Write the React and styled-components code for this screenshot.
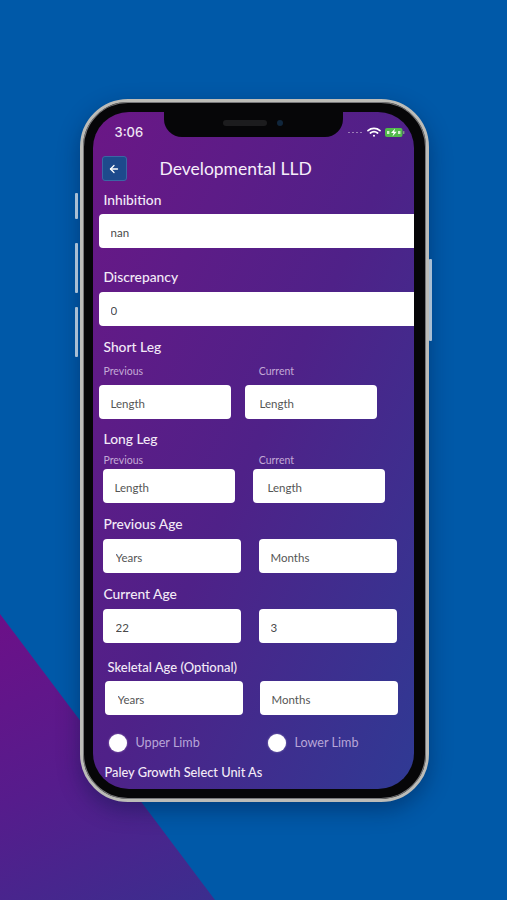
import React from "react";
import styled, { createGlobalStyle } from "styled-components";
import { ArrowLeft } from "lucide-react";

const GlobalStyle = createGlobalStyle`
  html, body {
    margin: 0;
    padding: 0;
    background: #0059a8;
    font-family: "Lato", "Liberation Sans", sans-serif;
  }
`;

const Page = styled.div`
  position: relative;
  width: 507px;
  height: 900px;
  overflow: hidden;
  background: #0059a8;
  display: flex;
  justify-content: center;
  align-items: flex-start;
  padding-top: 99px;
  box-sizing: border-box;
`;

const Corner = styled.div`
  position: absolute;
  left: 0;
  top: 614px;
  width: 215px;
  height: 286px;
  clip-path: polygon(0 0, 100% 100%, 0 100%);
  background: linear-gradient(155deg, #6c1088 0%, #561c8c 50%, #3b2e8e 100%);
`;

const Phone = styled.div`
  position: relative;
  width: 349px;
  height: 703px;
  box-sizing: border-box;
  margin-left: 1px;
  padding: 10px 11.5px 10px 10px;
  border: 3px solid #bcbcb8;
  border-radius: 48px;
  background: #060608;
  box-shadow: inset 0 0 0 1px #77777a, 0 8px 22px rgba(0, 20, 60, 0.4);
`;

const SideButton = styled.div`
  position: absolute;
  top: ${(p) => p.$top}px;
  ${(p) => (p.$right ? "right: -6px;" : "left: -7.5px;")}
  width: 3px;
  height: ${(p) => p.$height}px;
  background: #a9bfd4;
  border-radius: 1px;
`;

const Screen = styled.div`
  position: relative;
  height: 100%;
  overflow: hidden;
  border-radius: 36px;
  background: linear-gradient(to bottom right, #6b1786 0%, #4f2188 50%, #2f3a94 100%);
  color: #fff;
  padding-left: 6px;
`;

const Notch = styled.div`
  position: absolute;
  top: 0;
  left: 71px;
  width: 179px;
  height: 25px;
  background: #060608;
  border-radius: 0 0 18px 18px;
  display: flex;
  align-items: center;
  justify-content: center;
  gap: 10px;
  padding-bottom: 4px;
  box-sizing: border-box;
`;

const Speaker = styled.div`
  width: 44px;
  height: 6px;
  border-radius: 3px;
  background: #1c1c1e;
`;

const Camera = styled.div`
  width: 6px;
  height: 6px;
  border-radius: 50%;
  background: #10263c;
`;

const StatusBar = styled.div`
  height: 44px;
  display: flex;
  align-items: flex-start;
  justify-content: space-between;
  padding: 12px 9px 0 16px;
  box-sizing: border-box;
`;

const Time = styled.span`
  font-family: "Inter", "Liberation Sans", sans-serif;
  font-size: 13px;
  line-height: 16px;
  font-weight: 500;
  color: #efe6f4;
`;

const StatusIcons = styled.div`
  display: flex;
  align-items: center;
  gap: 4px;
  height: 16px;
`;

const Dots = styled.span`
  display: flex;
  gap: 2px;
  margin-right: 1px;

  i {
    width: 2px;
    height: 1px;
    background: #9a7db5;
  }
`;

const Header = styled.div`
  height: 25px;
  display: flex;
  align-items: center;
  padding-left: 3px;
`;

const BackButton = styled.div`
  width: 25px;
  height: 25px;
  box-sizing: border-box;
  border: 1px solid #3a66a4;
  border-radius: 3px;
  background: #1d4a8c;
  display: flex;
  align-items: center;
  justify-content: center;
`;

const Title = styled.h1`
  margin: 0 0 0 33px;
  font-size: 17.5px;
  line-height: 24px;
  font-weight: 400;
  color: #f6eefa;
`;

const Label = styled.div`
  margin-top: ${(p) => p.$top}px;
  margin-left: ${(p) => p.$left || 5}px;
  font-size: ${(p) => p.$size || 13.8}px;
  line-height: 16px;
  font-weight: 500;
  color: #f3eaf7;
`;

const SubLabels = styled.div`
  margin-top: ${(p) => p.$top}px;
  display: flex;
  padding-left: 5px;
`;

const SubLabel = styled.span`
  width: 156px;
  font-size: 10.5px;
  line-height: 12px;
  color: #c3a9d6;
`;

const Row = styled.div`
  margin-top: ${(p) => p.$top}px;
  margin-left: ${(p) => p.$left || 0}px;
  display: flex;
  gap: ${(p) => p.$gap || 0}px;
`;

const Field = styled.input`
  width: ${(p) => p.$width}px;
  height: 34px;
  flex: none;
  box-sizing: border-box;
  padding: 3px 0 0 ${(p) => p.$inset || 12}px;
  border: 0;
  border-radius: 4px;
  background: #fff;
  outline: none;
  font-family: "Lato", "Liberation Sans", sans-serif;
  font-size: 11.5px;
  color: #4a4a4a;

  &::placeholder {
    color: #555;
    opacity: 1;
  }
`;

const WideField = styled(Field)`
  width: 330px;
`;

const RadioRow = styled.div`
  margin-top: 19px;
  margin-left: 10px;
  display: flex;
`;

const RadioOption = styled.label`
  flex: none;
  width: 159px;
  display: flex;
  align-items: center;
  gap: 9px;
  font-size: 12.6px;
  line-height: 18px;
  color: #b8a6d8;
`;

const RadioDot = styled.span`
  width: 18px;
  height: 18px;
  border-radius: 50%;
  background: #fff;
  box-shadow: 0 0 2px rgba(255, 255, 255, 0.5);
`;

const Wifi = () => (
  <svg width="14" height="11" viewBox="0 0 14 11" fill="none" stroke="#fff" strokeWidth="1.7" strokeLinecap="round">
    <path d="M1 3.6C4.4 .7 9.6 .7 13 3.6" />
    <path d="M3.4 6C5.5 4.3 8.5 4.3 10.6 6" />
    <circle cx="7" cy="8.8" r="1" fill="#fff" stroke="none" />
  </svg>
);

const Battery = () => (
  <svg width="20" height="9" viewBox="0 0 20 9">
    <rect x="0" y="0" width="17.5" height="9" rx="2" fill="#52b94c" />
    <rect x="18" y="3" width="1.4" height="3" rx=".6" fill="#7d9a80" />
    <path d="M10 .6 6 5h2.6L7.4 8.4 11.8 3.8H9.2z" fill="#fff" />
    <rect x="2" y="3" width="2.4" height="3" fill="#d5efce" />
    <rect x="13" y="3" width="2.4" height="3" fill="#d5efce" />
  </svg>
);

const App = () => {
  return (
    <Page>
      <GlobalStyle />
      <Corner />
      <Phone>
        <SideButton $top={91} $height={26} />
        <SideButton $top={141} $height={50} />
        <SideButton $top={205} $height={50} />
        <SideButton $right $top={157} $height={82} />
        <Screen>
          <Notch>
            <Speaker />
            <Camera />
          </Notch>
          <StatusBar>
            <Time>3:06</Time>
            <StatusIcons>
              <Dots>
                <i />
                <i />
                <i />
                <i />
              </Dots>
              <Wifi />
              <Battery />
            </StatusIcons>
          </StatusBar>
          <Header>
            <BackButton>
              <ArrowLeft size={12} color="#fff" strokeWidth={2.6} />
            </BackButton>
            <Title>Developmental LLD</Title>
          </Header>

          <Label $top={11}>Inhibition</Label>
          <Row $top={6}>
            <WideField readOnly value="nan" />
          </Row>

          <Label $top={21}>Discrepancy</Label>
          <Row $top={7}>
            <WideField readOnly value="0" />
          </Row>

          <Label $top={13}>Short Leg</Label>
          <SubLabels $top={10}>
            <SubLabel>Previous</SubLabel>
            <SubLabel>Current</SubLabel>
          </SubLabels>
          <Row $top={8} $gap={14}>
            <Field $width={132} readOnly placeholder="Length" />
            <Field $width={132} $inset={15} readOnly placeholder="Length" />
          </Row>

          <Label $top={12}>Long Leg</Label>
          <SubLabels $top={7}>
            <SubLabel>Previous</SubLabel>
            <SubLabel>Current</SubLabel>
          </SubLabels>
          <Row $top={3} $left={4} $gap={18}>
            <Field $width={132} readOnly placeholder="Length" />
            <Field $width={132} $inset={15} readOnly placeholder="Length" />
          </Row>

          <Label $top={13}>Previous Age</Label>
          <Row $top={7} $left={4} $gap={18}>
            <Field $width={138} $inset={13} readOnly placeholder="Years" />
            <Field $width={138} readOnly placeholder="Months" />
          </Row>

          <Label $top={13}>Current Age</Label>
          <Row $top={7} $left={4} $gap={18}>
            <Field $width={138} $inset={13} readOnly value="22" />
            <Field $width={138} readOnly value="3" />
          </Row>

          <Label $top={16} $left={9} $size={13}>
            Skeletal Age (Optional)
          </Label>
          <Row $top={6} $left={6} $gap={17}>
            <Field $width={138} $inset={13} readOnly placeholder="Years" />
            <Field $width={138} readOnly placeholder="Months" />
          </Row>

          <RadioRow>
            <RadioOption>
              <RadioDot />
              Upper Limb
            </RadioOption>
            <RadioOption>
              <RadioDot />
              Lower Limb
            </RadioOption>
          </RadioRow>

          <Label $top={12} $left={6} $size={12.8}>
            Paley Growth Select Unit As
          </Label>
        </Screen>
      </Phone>
    </Page>
  );
};

export default App;
